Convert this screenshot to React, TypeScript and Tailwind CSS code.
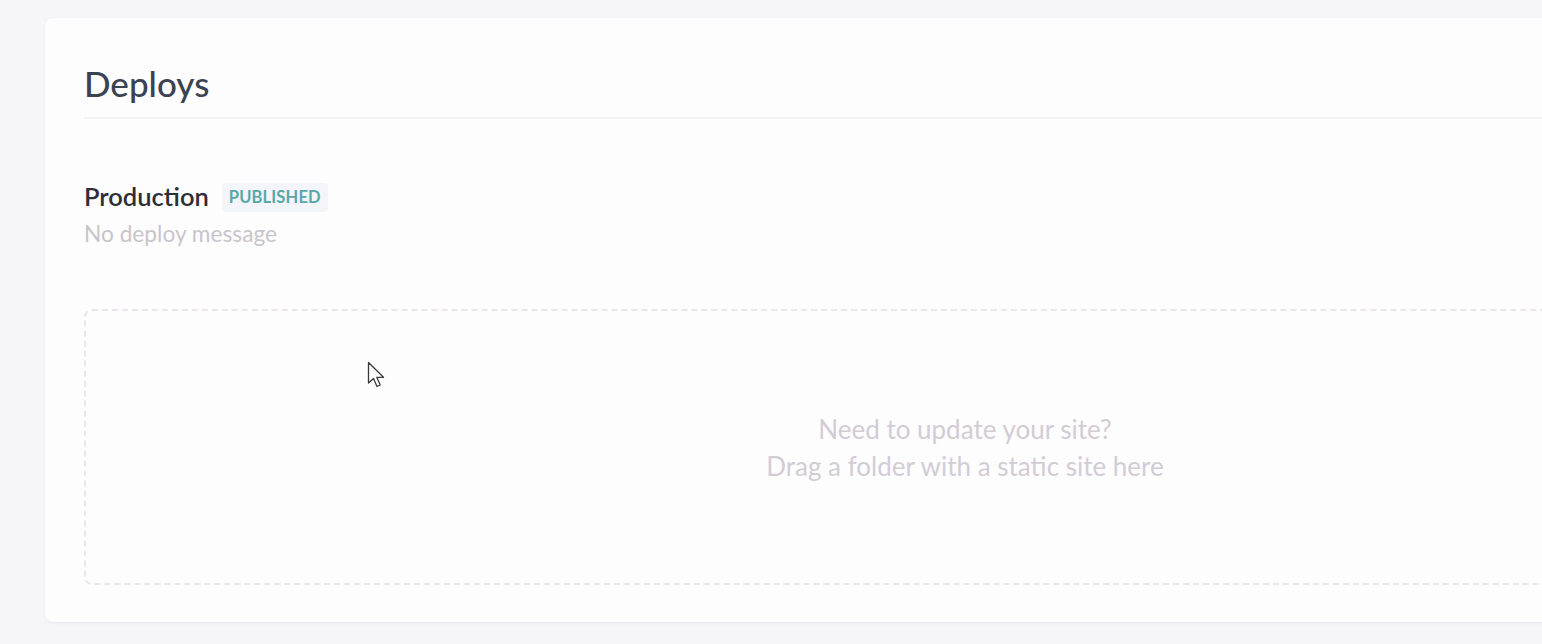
import React from 'react'

function Cursor() {
  return (
    <svg width="22" height="30" viewBox="0 0 22 30" className="absolute left-[367px] top-[361px]">
      <path
        d="M1.5 1.5 L1.5 22 L6.5 17.5 L10 25.5 L13.2 24 L9.8 16.3 L16.5 16.3 Z"
        fill="#ffffff"
        stroke="#3a3a3a"
        strokeWidth="1.3"
        strokeLinejoin="round"
      />
    </svg>
  )
}

export default function App() {
  return (
    <div
      className="relative h-[644px] w-full overflow-hidden bg-[#f6f5fa] pt-[18px] pl-[45px]"
      style={{ fontFamily: 'Lato, "Open Sans", sans-serif' }}
    >
      <div className="w-[1840px] rounded-lg bg-[#fefdfe] px-[39px] pb-[37px] shadow-[0_1px_3px_rgba(60,50,80,0.08)]">
        {/* Cabeçalho */}
        <div className="border-b-2 border-[#f4f2f7] pt-[45px] pb-[14px]">
          <h1 className="text-[35px] leading-[40px] font-medium text-[#3b4252]">Deploys</h1>
        </div>

        {/* Produção */}
        <div className="pt-[60px]">
          <div className="flex items-center gap-[13px]">
            <span className="text-[25.5px] leading-[30px] font-semibold text-[#2e2e35]">Production</span>
            <span className="mt-[4px] rounded bg-[#f4f5fa] px-[7px] py-[4px] text-[16.5px] leading-[21px] font-bold tracking-[0.01em] text-[#56a8a9]">
              PUBLISHED
            </span>
          </div>
          <p className="mt-[9px] text-[22.7px] leading-[26px] text-[#c9c4cb]">No deploy message</p>
        </div>

        {/* Área de arrastar */}
        <div className="mt-[62px] flex h-[276px] flex-col items-center justify-center rounded-lg border-2 border-dashed border-[#ebe6eb] pt-[2px]">
          <p className="text-[26px] leading-[37px] text-[#d3ccd5]">Need to update your site?</p>
          <p className="text-[26px] leading-[37px] text-[#d3ccd5]">Drag a folder with a static site here</p>
        </div>
      </div>

      <Cursor />
    </div>
  )
}
